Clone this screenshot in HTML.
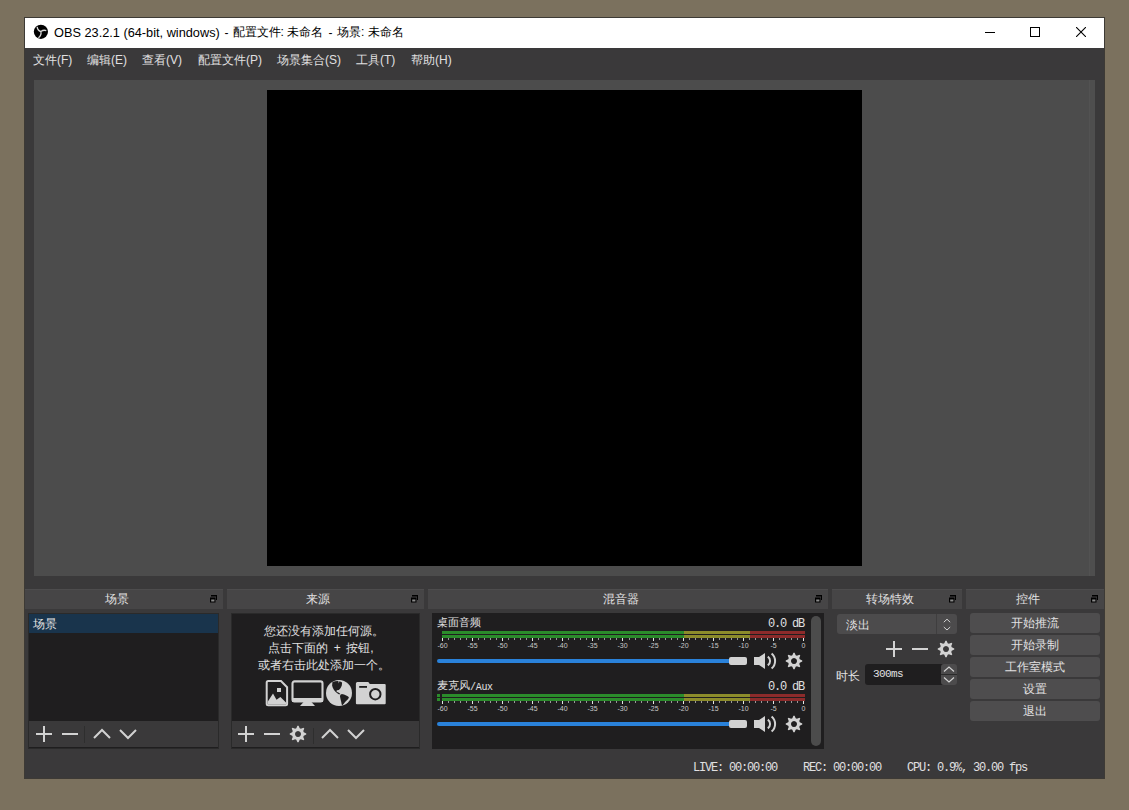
<!DOCTYPE html>
<html><head><meta charset="utf-8">
<style>
*{box-sizing:border-box;margin:0;padding:0}
html,body{width:1129px;height:810px;overflow:hidden;background:#7b715e;font-family:"Liberation Sans",sans-serif}
.a{position:absolute}
#win{left:24px;top:17px;width:1081px;height:762px;background:#3a393a;border:1px solid #3d3a35}
#title{left:25px;top:18px;width:1079px;height:30px;background:#fff}
.tt{font-size:12px;color:#000;white-space:nowrap}
.menu{font-size:12px;color:#e1e0e1;white-space:nowrap;top:52px}
#prev{left:34px;top:80px;width:1061px;height:496px;background:#4c4c4c}
#black{left:267px;top:90px;width:595px;height:476px;background:#000}
.dt{top:589px;height:20px;border-top:1px solid #4d4c4d;background:#464546;color:#e1e0e1;font-size:12px;text-align:center;line-height:19px;padding-right:15px}
.fl{position:absolute;right:6px;top:5px;width:7px;height:8px}
.frame{top:613px;height:136px;background:#1f1e1f;border:1px solid #2a2a2a}
.tb{position:absolute;left:0;right:0;bottom:0;height:27px;background:#3a393a;border-bottom:1px solid #1f1e1f}
.btn{left:970px;width:130px;height:20px;background:#4e4d4e;border-radius:3px;color:#e1e0e1;font-size:12px;text-align:center;line-height:20px}
.st{top:760.5px;font-family:"Liberation Mono",monospace;font-size:12px;letter-spacing:-1.2px;color:#e1e0e1;white-space:nowrap}
.ml{font-size:11px;color:#e1e0e1;white-space:nowrap}
.mono{font-family:"Liberation Mono",monospace;font-size:12px;letter-spacing:-1.2px;color:#e1e0e1;white-space:nowrap}
.tick{font-size:7px;color:#c8c8c8;white-space:nowrap;text-align:center}
</style></head><body>
<div id="win" class="a"></div>
<div id="title" class="a"></div>
<svg class="a" style="left:33px;top:24px" width="16" height="16" viewBox="0 0 16 16">
 <circle cx="7.9" cy="7.8" r="7.1" fill="#000"/>
 <path d="M4.2 2.9Q4.4 6.4 7.9 7.6Q10.4 5.6 13.3 6.6M7.9 7.6Q8.6 11.4 5.4 13.8" stroke="#d8d8d8" stroke-width="1.3" fill="none"/>
</svg>
<div class="a tt" style="left:54px;top:26px;transform-origin:0 0;transform:scaleX(1.062)">OBS 23.2.1 (64-bit, windows)</div>
<div class="a tt" style="left:224.5px;top:26px">-</div>
<div class="a tt" style="left:232.5px;top:24px">配置文件:</div>
<div class="a tt" style="left:287px;top:24px">未命名</div>
<div class="a tt" style="left:328.5px;top:26px">-</div>
<div class="a tt" style="left:337px;top:24px">场景:</div>
<div class="a tt" style="left:368px;top:24px">未命名</div>
<!-- window controls -->
<div class="a" style="left:985px;top:32px;width:10px;height:1px;background:#000"></div>
<div class="a" style="left:1030px;top:27px;width:10px;height:10px;border:1px solid #000"></div>
<svg class="a" style="left:1076px;top:27px" width="10" height="10" viewBox="0 0 10 10"><path d="M0 0L10 10M10 0L0 10" stroke="#000" stroke-width="1.1"/></svg>

<div class="a menu" style="left:33px">文件(F)</div>
<div class="a menu" style="left:87px">编辑(E)</div>
<div class="a menu" style="left:142px">查看(V)</div>
<div class="a menu" style="left:198px">配置文件(P)</div>
<div class="a menu" style="left:277px">场景集合(S)</div>
<div class="a menu" style="left:356px">工具(T)</div>
<div class="a menu" style="left:411px">帮助(H)</div>

<div id="prev" class="a"></div>
<div class="a" style="left:1089px;top:80px;width:1px;height:496px;background:#525252"></div>
<div class="a" style="left:1090px;top:80px;width:5px;height:496px;background:#4e4e4e"></div>
<div id="black" class="a"></div>

<!-- dock titles -->
<div class="a dt" style="left:25px;width:198px">场景<svg class="fl" viewBox="0 0 7 8"><path d="M1 0h6v5h-1v-3.5h-5z" fill="#000"/><rect x="0" y="2.5" width="5.5" height="5" fill="#000"/><rect x="1.2" y="4.5" width="3.2" height="2" fill="#8a8a8a"/></svg></div>
<div class="a dt" style="left:227px;width:197px">来源<svg class="fl" viewBox="0 0 7 8"><path d="M1 0h6v5h-1v-3.5h-5z" fill="#000"/><rect x="0" y="2.5" width="5.5" height="5" fill="#000"/><rect x="1.2" y="4.5" width="3.2" height="2" fill="#8a8a8a"/></svg></div>
<div class="a dt" style="left:428px;width:400px">混音器<svg class="fl" viewBox="0 0 7 8"><path d="M1 0h6v5h-1v-3.5h-5z" fill="#000"/><rect x="0" y="2.5" width="5.5" height="5" fill="#000"/><rect x="1.2" y="4.5" width="3.2" height="2" fill="#8a8a8a"/></svg></div>
<div class="a dt" style="left:832px;width:130px">转场特效<svg class="fl" viewBox="0 0 7 8"><path d="M1 0h6v5h-1v-3.5h-5z" fill="#000"/><rect x="0" y="2.5" width="5.5" height="5" fill="#000"/><rect x="1.2" y="4.5" width="3.2" height="2" fill="#8a8a8a"/></svg></div>
<div class="a dt" style="left:966px;width:138px">控件<svg class="fl" viewBox="0 0 7 8"><path d="M1 0h6v5h-1v-3.5h-5z" fill="#000"/><rect x="0" y="2.5" width="5.5" height="5" fill="#000"/><rect x="1.2" y="4.5" width="3.2" height="2" fill="#8a8a8a"/></svg></div>

<!-- scene dock -->
<div class="a frame" style="left:28px;width:191px">
  <div class="a" style="left:0;top:0;width:189px;height:19px;background:#19344c"></div>
  <div class="tb"></div>
</div>
<div class="a" style="left:33px;top:616px;font-size:12px;color:#e1e0e1">场景</div>
<svg class="a" style="left:28px;top:721px" width="191" height="27">
 <g stroke="#d2d2d2" stroke-width="2" fill="none">
  <path d="M8 13h16M16 5v16"/>
  <path d="M34 13h16"/>
  <path d="M66 17l8-8l8 8"/>
  <path d="M92 9l8 8l8-8"/>
 </g>
 <path d="M56.5 5v17" stroke="#2e2e2e" stroke-width="1"/>
</svg>

<!-- source dock -->
<div class="a frame" style="left:231px;width:189px">
  <div class="tb"></div>
</div>
<div class="a" style="left:229px;top:623px;width:189px;text-align:center;font-size:12px;line-height:17px;color:#e1e0e1">您还没有添加任何源。<br><span style="word-spacing:2px;padding-right:5px">点击下面的 + 按钮,</span><br>或者右击此处添加一个。</div>


<svg class="a" style="left:231px;top:721px" width="189" height="27">
 <g stroke="#d2d2d2" stroke-width="2" fill="none">
  <path d="M7 13h16M15 5v16"/>
  <path d="M33 13h16"/>
  <path d="M91 17l8-8l8 8"/>
  <path d="M117 9l8 8l8-8"/>
 </g>
 <path d="M82.5 7v16" stroke="#2e2e2e" stroke-width="1"/>
</svg>
<svg class="a" style="left:289.0px;top:725.0px" width="18" height="18" viewBox="0 0 18 18"><path d="M14.76 7.33L17.28 8.41L17.28 9.59L14.76 10.67L14.26 11.89L15.27 14.44L14.44 15.27L11.89 14.26L10.67 14.76L9.59 17.28L8.41 17.28L7.33 14.76L6.11 14.26L3.56 15.27L2.73 14.44L3.74 11.89L3.24 10.67L0.72 9.59L0.72 8.41L3.24 7.33L3.74 6.11L2.73 3.56L3.56 2.73L6.11 3.74L7.33 3.24L8.41 0.72L9.59 0.72L10.67 3.24L11.89 3.74L14.44 2.73L15.27 3.56L14.26 6.11Z M9.0 6.0a3.0 3.0 0 1 0 0.001 0z" fill="#d2d2d2" fill-rule="evenodd"/></svg>
<svg class="a" style="left:265px;top:679px" width="124" height="29" viewBox="0 0 124 29">
 <path d="M1.7 3.6a1.5 1.5 0 0 1 1.5-1.5h12.8l6.1 6.1v16.6a1.5 1.5 0 0 1-1.5 1.5h-17.4a1.5 1.5 0 0 1-1.5-1.5z" stroke="#d2d2d2" stroke-width="2" fill="none"/>
 <rect x="12" y="9" width="4" height="4" fill="#d2d2d2"/>
 <path d="M2.7 25.3V22.8L8 14.6L11.5 20.8L15.4 18L21 23.5V25.3Z" fill="#d2d2d2"/>
 <rect x="27.5" y="2.4" width="30" height="20" rx="2" stroke="#d2d2d2" stroke-width="2.1" fill="none"/>
 <rect x="27" y="19" width="31" height="4" fill="#d2d2d2"/>
 <path d="M39 22.5h7l4 4.5h-15z" fill="#d2d2d2"/>
 <circle cx="74" cy="14" r="13" fill="#d2d2d2"/>
 <path d="M67.5 2.9L70.1 2.3L73.3 2.1L73.8 4.6L74.4 2.3L76.4 2.9L77.1 3.8L76.8 6.4L75.9 8.6L74.9 10.1L73.8 10.9L72.0 11.2L71.4 12.0L72.0 12.9L73.4 13.6L74.9 14.6L75.5 15.3L73.8 15.3L72.3 14.2L70.5 12.7L69.0 10.9L67.7 8.6L67.1 6.4L67.3 4.2ZM75.3 15.9L76.8 15.1L79.0 15.5L81.2 16.4L83.1 17.5L83.9 18.6L83.1 20.1L81.6 21.6L80.1 23.1L78.6 24.9L77.1 26.5L76.6 24.9L76.2 22.7L75.5 20.1L75.0 17.5Z" fill="#1f1e1f"/>
 <path d="M90.9 4.4Q90.9 2.9 92.4 2.9H103.3L104.8 4.9H119.7Q120.7 4.9 120.7 5.9V24.3Q120.7 25.3 119.7 25.3H91.9Q90.9 25.3 90.9 24.3Z" fill="#d2d2d2"/>
 <rect x="94.2" y="7" width="7.8" height="1.8" fill="#1f1e1f"/>
 <circle cx="110.3" cy="15.2" r="5.2" stroke="#1f1e1f" stroke-width="2" fill="none"/>
</svg>
<!-- mixer -->
<div class="a frame" style="left:432px;width:392px;border:none"></div>
<div class="a ml" style="left:437px;top:615px">桌面音频</div>
<div class="a mono" style="left:768px;top:617px">0.0 dB</div>
<svg class="a" style="left:437px;top:631px" width="370" height="12"><rect x="5" y="0" width="242" height="3" fill="#2b8c2b"/><rect x="247" y="0" width="66" height="3" fill="#8c8c2b"/><rect x="313" y="0" width="55" height="3" fill="#8c2b2b"/><rect x="5" y="4" width="242" height="3" fill="#2b8c2b"/><rect x="247" y="4" width="66" height="3" fill="#8c8c2b"/><rect x="313" y="4" width="55" height="3" fill="#8c2b2b"/><path d="M11.5 7v2M17.5 7v2M23.5 7v2M29.5 7v2M41.5 7v2M47.5 7v2M53.5 7v2M59.5 7v2M71.5 7v2M77.5 7v2M83.5 7v2M89.5 7v2M101.5 7v2M107.5 7v2M113.5 7v2M119.5 7v2M131.5 7v2M137.5 7v2M143.5 7v2M149.5 7v2M161.5 7v2M167.5 7v2M173.5 7v2M179.5 7v2M192.5 7v2M198.5 7v2M204.5 7v2M210.5 7v2M222.5 7v2M228.5 7v2M234.5 7v2M240.5 7v2M252.5 7v2M258.5 7v2M264.5 7v2M270.5 7v2M282.5 7v2M288.5 7v2M294.5 7v2M300.5 7v2M312.5 7v2M318.5 7v2M324.5 7v2M330.5 7v2M342.5 7v2M348.5 7v2M354.5 7v2M360.5 7v2" stroke="#9a9a9a" stroke-width="1"/><path d="M5.5 7v3M35.5 7v3M65.5 7v3M95.5 7v3M125.5 7v3M155.5 7v3M185.5 7v3M216.5 7v3M246.5 7v3M276.5 7v3M306.5 7v3M336.5 7v3M366.5 7v3" stroke="#e6e6e6" stroke-width="1"/></svg>
<div class="a tick" style="left:427.0px;width:31px;top:641.5px">-60</div>
<div class="a tick" style="left:457.0px;width:31px;top:641.5px">-55</div>
<div class="a tick" style="left:487.0px;width:31px;top:641.5px">-50</div>
<div class="a tick" style="left:517.0px;width:31px;top:641.5px">-45</div>
<div class="a tick" style="left:547.0px;width:31px;top:641.5px">-40</div>
<div class="a tick" style="left:577.0px;width:31px;top:641.5px">-35</div>
<div class="a tick" style="left:607.0px;width:31px;top:641.5px">-30</div>
<div class="a tick" style="left:638.0px;width:31px;top:641.5px">-25</div>
<div class="a tick" style="left:668.0px;width:31px;top:641.5px">-20</div>
<div class="a tick" style="left:698.0px;width:31px;top:641.5px">-15</div>
<div class="a tick" style="left:728.0px;width:31px;top:641.5px">-10</div>
<div class="a tick" style="left:758.0px;width:31px;top:641.5px">-5</div>
<div class="a tick" style="left:788.0px;width:31px;top:641.5px">0</div>
<div class="a" style="left:437px;top:659px;width:296px;height:4px;background:#2a82da;border-radius:2px"></div>
<div class="a" style="left:729px;top:657px;width:18px;height:8px;background:#d2d2d2;border-radius:2px"></div>
<svg class="a" style="left:753px;top:652px" width="24" height="18" viewBox="0 0 24 18"><path d="M1 5h5l6-4v16l-6-4h-5z" fill="#d2d2d2"/><path d="M14.8 4.6a5.4 5.4 0 0 1 0 8.8M18.6 1.4a10 10 0 0 1 0 15.2" stroke="#d2d2d2" stroke-width="2" fill="none"/></svg>
<svg class="a" style="left:785.0px;top:652.0px" width="18" height="18" viewBox="0 0 18 18"><path d="M14.76 7.33L17.28 8.41L17.28 9.59L14.76 10.67L14.26 11.89L15.27 14.44L14.44 15.27L11.89 14.26L10.67 14.76L9.59 17.28L8.41 17.28L7.33 14.76L6.11 14.26L3.56 15.27L2.73 14.44L3.74 11.89L3.24 10.67L0.72 9.59L0.72 8.41L3.24 7.33L3.74 6.11L2.73 3.56L3.56 2.73L6.11 3.74L7.33 3.24L8.41 0.72L9.59 0.72L10.67 3.24L11.89 3.74L14.44 2.73L15.27 3.56L14.26 6.11Z M9.0 6.0a3.0 3.0 0 1 0 0.001 0z" fill="#d2d2d2" fill-rule="evenodd"/></svg>
<div class="a ml" style="left:437px;top:678px">麦克风</div>
<div class="a mono" style="left:470px;top:681.5px;font-size:10px;letter-spacing:-0.3px">/Aux</div>
<div class="a mono" style="left:768px;top:680px">0.0 dB</div>
<svg class="a" style="left:437px;top:694px" width="370" height="12"><rect x="5" y="0" width="242" height="3" fill="#2b8c2b"/><rect x="247" y="0" width="66" height="3" fill="#8c8c2b"/><rect x="313" y="0" width="55" height="3" fill="#8c2b2b"/><rect x="0" y="0" width="3" height="3" fill="#2b8c2b"/><rect x="5" y="4" width="242" height="3" fill="#2b8c2b"/><rect x="247" y="4" width="66" height="3" fill="#8c8c2b"/><rect x="313" y="4" width="55" height="3" fill="#8c2b2b"/><rect x="0" y="4" width="3" height="3" fill="#2b8c2b"/><path d="M11.5 7v2M17.5 7v2M23.5 7v2M29.5 7v2M41.5 7v2M47.5 7v2M53.5 7v2M59.5 7v2M71.5 7v2M77.5 7v2M83.5 7v2M89.5 7v2M101.5 7v2M107.5 7v2M113.5 7v2M119.5 7v2M131.5 7v2M137.5 7v2M143.5 7v2M149.5 7v2M161.5 7v2M167.5 7v2M173.5 7v2M179.5 7v2M192.5 7v2M198.5 7v2M204.5 7v2M210.5 7v2M222.5 7v2M228.5 7v2M234.5 7v2M240.5 7v2M252.5 7v2M258.5 7v2M264.5 7v2M270.5 7v2M282.5 7v2M288.5 7v2M294.5 7v2M300.5 7v2M312.5 7v2M318.5 7v2M324.5 7v2M330.5 7v2M342.5 7v2M348.5 7v2M354.5 7v2M360.5 7v2" stroke="#9a9a9a" stroke-width="1"/><path d="M5.5 7v3M35.5 7v3M65.5 7v3M95.5 7v3M125.5 7v3M155.5 7v3M185.5 7v3M216.5 7v3M246.5 7v3M276.5 7v3M306.5 7v3M336.5 7v3M366.5 7v3" stroke="#e6e6e6" stroke-width="1"/></svg>
<div class="a tick" style="left:427.0px;width:31px;top:704.5px">-60</div>
<div class="a tick" style="left:457.0px;width:31px;top:704.5px">-55</div>
<div class="a tick" style="left:487.0px;width:31px;top:704.5px">-50</div>
<div class="a tick" style="left:517.0px;width:31px;top:704.5px">-45</div>
<div class="a tick" style="left:547.0px;width:31px;top:704.5px">-40</div>
<div class="a tick" style="left:577.0px;width:31px;top:704.5px">-35</div>
<div class="a tick" style="left:607.0px;width:31px;top:704.5px">-30</div>
<div class="a tick" style="left:638.0px;width:31px;top:704.5px">-25</div>
<div class="a tick" style="left:668.0px;width:31px;top:704.5px">-20</div>
<div class="a tick" style="left:698.0px;width:31px;top:704.5px">-15</div>
<div class="a tick" style="left:728.0px;width:31px;top:704.5px">-10</div>
<div class="a tick" style="left:758.0px;width:31px;top:704.5px">-5</div>
<div class="a tick" style="left:788.0px;width:31px;top:704.5px">0</div>
<div class="a" style="left:437px;top:722px;width:296px;height:4px;background:#2a82da;border-radius:2px"></div>
<div class="a" style="left:729px;top:720px;width:18px;height:8px;background:#d2d2d2;border-radius:2px"></div>
<svg class="a" style="left:753px;top:715px" width="24" height="18" viewBox="0 0 24 18"><path d="M1 5h5l6-4v16l-6-4h-5z" fill="#d2d2d2"/><path d="M14.8 4.6a5.4 5.4 0 0 1 0 8.8M18.6 1.4a10 10 0 0 1 0 15.2" stroke="#d2d2d2" stroke-width="2" fill="none"/></svg>
<svg class="a" style="left:785.0px;top:715.0px" width="18" height="18" viewBox="0 0 18 18"><path d="M14.76 7.33L17.28 8.41L17.28 9.59L14.76 10.67L14.26 11.89L15.27 14.44L14.44 15.27L11.89 14.26L10.67 14.76L9.59 17.28L8.41 17.28L7.33 14.76L6.11 14.26L3.56 15.27L2.73 14.44L3.74 11.89L3.24 10.67L0.72 9.59L0.72 8.41L3.24 7.33L3.74 6.11L2.73 3.56L3.56 2.73L6.11 3.74L7.33 3.24L8.41 0.72L9.59 0.72L10.67 3.24L11.89 3.74L14.44 2.73L15.27 3.56L14.26 6.11Z M9.0 6.0a3.0 3.0 0 1 0 0.001 0z" fill="#d2d2d2" fill-rule="evenodd"/></svg>
<div class="a" style="left:811px;top:616px;width:10px;height:130px;background:#4c4c4c;border-radius:5px"></div>


<!-- transitions -->
<div class="a" style="left:837px;top:614px;width:120px;height:20px;background:#4c4b4c;border-radius:3px"></div>
<div class="a" style="left:936px;top:614px;width:1px;height:20px;background:#3f3e3f"></div>
<div class="a" style="left:846px;top:617px;font-size:12px;color:#e1e0e1">淡出</div>
<svg class="a" style="left:943px;top:618px" width="8" height="14"><path d="M0.8 4.2l3.2-3l3.2 3M0.8 9l3.2 3l3.2-3" stroke="#d2d2d2" stroke-width="1" fill="none"/></svg>
<svg class="a" style="left:885px;top:640px" width="46" height="18"><path d="M1 9h16M9 1v16M27 9h16" stroke="#d2d2d2" stroke-width="2" fill="none"/></svg>
<svg class="a" style="left:937.0px;top:640.0px" width="18" height="18" viewBox="0 0 18 18"><path d="M14.76 7.33L17.28 8.41L17.28 9.59L14.76 10.67L14.26 11.89L15.27 14.44L14.44 15.27L11.89 14.26L10.67 14.76L9.59 17.28L8.41 17.28L7.33 14.76L6.11 14.26L3.56 15.27L2.73 14.44L3.74 11.89L3.24 10.67L0.72 9.59L0.72 8.41L3.24 7.33L3.74 6.11L2.73 3.56L3.56 2.73L6.11 3.74L7.33 3.24L8.41 0.72L9.59 0.72L10.67 3.24L11.89 3.74L14.44 2.73L15.27 3.56L14.26 6.11Z M9.0 6.0a3.0 3.0 0 1 0 0.001 0z" fill="#d2d2d2" fill-rule="evenodd"/></svg>
<div class="a" style="left:836px;top:668px;font-size:12px;color:#e1e0e1">时长</div>
<div class="a" style="left:865px;top:664px;width:80px;height:21px;background:#1f1e1f;border-radius:3px"></div>
<div class="a" style="left:941px;top:664px;width:16px;height:21px;background:#4c4b4c;border-radius:3px"></div>
<div class="a" style="left:941px;top:674px;width:16px;height:1px;background:#2a2a2a"></div>
<svg class="a" style="left:943px;top:666px" width="12" height="18"><path d="M1 5.5l5-4.5l5 4.5M1 11.5l5 4.5l5-4.5" stroke="#d2d2d2" stroke-width="1.2" fill="none"/></svg>
<div class="a" style="left:873px;top:668px;font-family:'Liberation Mono',monospace;font-size:11px;letter-spacing:-0.6px;color:#e1e0e1">300ms</div>

<!-- controls -->
<div class="a btn" style="top:613px">开始推流</div>
<div class="a btn" style="top:635px">开始录制</div>
<div class="a btn" style="top:657px">工作室模式</div>
<div class="a btn" style="top:679px">设置</div>
<div class="a btn" style="top:701px">退出</div>

<!-- status -->
<div class="a st" style="left:693px">LIVE: 00:00:00</div>
<div class="a st" style="left:803px">REC: 00:00:00</div>
<div class="a st" style="left:907px">CPU: 0.9%, 30.00 fps</div>
</body></html>
